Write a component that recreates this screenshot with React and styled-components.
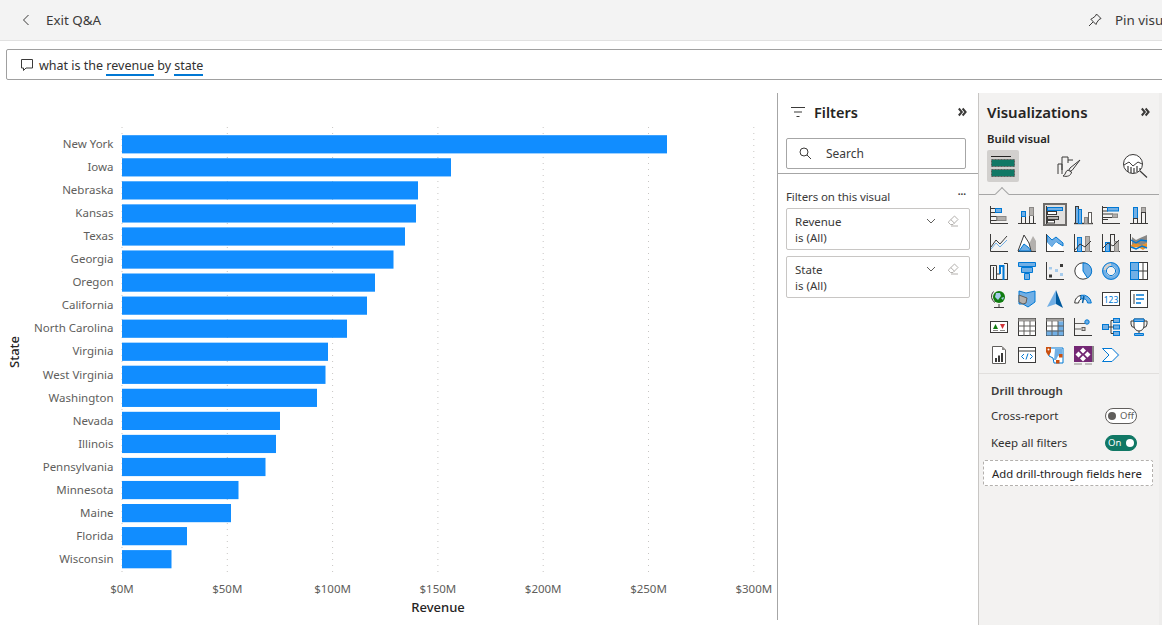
import React from "react";
import styled, { createGlobalStyle } from "styled-components";

const D = "#3b3a39";
const B = "#0078d4";
const L = "#71afe5";
const G = "#b3b0ad";

const states = [
	["New York", 545], ["Iowa", 329], ["Nebraska", 296], ["Kansas", 294], ["Texas", 283],
	["Georgia", 271.5], ["Oregon", 253], ["California", 245], ["North Carolina", 225], ["Virginia", 206],
	["West Virginia", 203.5], ["Washington", 195], ["Nevada", 158], ["Illinois", 154], ["Pennsylvania", 143.5],
	["Minnesota", 116.5], ["Maine", 109], ["Florida", 65], ["Wisconsin", 49.5]
];
const ticks = ["$0M", "$50M", "$100M", "$150M", "$200M", "$250M", "$300M"];

const GlobalStyle = createGlobalStyle`
	html, body { margin: 0; padding: 0; background: #fff; }
	body { font-family: "Noto Sans", "Open Sans", sans-serif; font-size: 12px; color: #252423; overflow: hidden; }
`;

const Page = styled.div`
	width: 1162px;
	height: 625px;
	overflow: hidden;
	display: flex;
	flex-direction: column;
`;

const TopBar = styled.div`
	flex: none;
	width: 1200px;
	height: 40px;
	box-sizing: content-box;
	background: #f3f3f3;
	border-bottom: 1px solid #e1e1e1;
	display: flex;
	align-items: center;
	padding-left: 21px;
	font-size: 13.4px;
	color: #3b3a39;
`;

const ExitLabel = styled.span`
	margin-left: 15px;
`;

const PinGroup = styled.div`
	margin-left: auto;
	width: 133px;
	display: flex;
	align-items: center;
	gap: 13px;
`;

const AskRow = styled.div`
	flex: none;
	height: 52px;
	box-sizing: border-box;
	padding: 8px 0 13px 6px;
`;

const AskBox = styled.div`
	width: 1190px;
	height: 31px;
	box-sizing: border-box;
	border: 1px solid #a0a0a0;
	border-radius: 2px;
	display: flex;
	align-items: center;
	gap: 5px;
	padding-left: 13px;
	font-size: 12.5px;
	color: #323130;
	white-space: pre;
`;

const AskText = styled.span`
	padding-top: 2px;
`;

const Term = styled.span`
	display: inline-block;
	line-height: 17px;
	border-bottom: 2px solid ${B};
	margin-bottom: -2px;
`;

const Main = styled.div`
	flex: 1;
	display: flex;
	min-height: 0;
`;

const ChartArea = styled.div`
	width: 777px;
	flex: none;
`;

const Chart = styled.svg`
	display: block;
	font-family: "Noto Sans", "Open Sans", sans-serif;
`;

const FilterPane = styled.div`
	width: 200px;
	flex: none;
	height: 527px;
	border-left: 1px solid #a6a6a6;
	display: flex;
	flex-direction: column;
`;

const FilterHead = styled.div`
	height: 38px;
	margin-bottom: 7px;
	display: flex;
	align-items: center;
	padding: 0 11px 0 13px;
	gap: 9px;
`;

const PaneTitle = styled.div`
	font-size: ${(p) => p.$size || "15px"};
	font-weight: 600;
	color: #252423;
	flex: 1;
`;

const SearchWrap = styled.div`
	padding: 0 12px 0 8px;
`;

const SearchBox = styled.div`
	height: 31px;
	box-sizing: border-box;
	border: 1px solid #a6a6a6;
	border-radius: 2px;
	display: flex;
	align-items: center;
	gap: 14px;
	padding-left: 12px;
	color: #3b3a39;
`;

const FilterBody = styled.div`
	margin-top: 4px;
	border-top: 1px solid #a6a6a6;
	padding: 16px 8px 0 8px;
	display: flex;
	flex-direction: column;
	gap: 6px;
`;

const SectionRow = styled.div`
	display: flex;
	justify-content: space-between;
	align-items: center;
	height: 13px;
	margin-bottom: -1px;
	font-size: 11.5px;
	letter-spacing: -0.1px;
	color: #3b3a39;
	padding-right: 4px;
`;

const Dots = styled.span`
	font-weight: 700;
	line-height: 6px;
	font-size: 10px;
	margin-top: -6px;
`;

const FilterCard = styled.div`
	height: 42px;
	box-sizing: border-box;
	border: 1px solid #c8c6c4;
	border-radius: 2px;
	padding: 5px 8px 0;
	position: relative;
	font-size: 11.5px;
	line-height: 16px;
	color: #3b3a39;
`;

const CardIcons = styled.div`
	position: absolute;
	right: 10px;
	top: 6px;
	display: flex;
	align-items: center;
	gap: 11px;
`;

const VizPane = styled.div`
	flex: 1;
	background: #f3f2f1;
	border-left: 1px solid #c8c6c4;
	border-right: 3px solid #eeedec;
	display: flex;
	flex-direction: column;
`;

const VizHead = styled.div`
	height: 38px;
	display: flex;
	align-items: center;
	padding: 0 9px 0 8px;
`;

const BuildLabel = styled.div`
	font-size: 11.3px;
	font-weight: 600;
	color: #252423;
	padding-left: 8px;
	line-height: 15px;
`;

const Tabs = styled.div`
	position: relative;
	height: 44px;
	margin-top: 4px;
	border-bottom: 1px solid #a6a6a6;
	display: grid;
	grid-template-columns: 32px 32px 32px;
	justify-content: space-between;
	padding: 0 8px 0 8px;
	&::after {
		content: "";
		position: absolute;
		left: 18px;
		bottom: -5px;
		width: 9px;
		height: 9px;
		background: #f3f2f1;
		border-left: 1px solid #a6a6a6;
		border-top: 1px solid #a6a6a6;
		transform: rotate(45deg);
	}
`;

const Tab = styled.div`
	width: 32px;
	height: 32px;
	display: flex;
	align-items: center;
	justify-content: center;
	background: ${(p) => (p.$active ? "#d2d0ce" : "transparent")};
	border-radius: 2px;
`;

const VizGrid = styled.div`
	display: grid;
	grid-template-columns: repeat(6, 28px);
	grid-auto-rows: 28px;
	padding: 6px 0 4px 6px;
	border-bottom: 1px solid #e1dfdd;
`;

const VizCell = styled.div`
	display: flex;
	align-items: center;
	justify-content: center;
	${(p) => p.$active && `
		margin: 2px 2px 3px;
		background: #e1dfdd;
		border: 2px solid #6e6c6a;
	`}
`;

const DrillSection = styled.div`
	padding: 8px 0 0 12px;
`;

const DrillTitle = styled.div`
	font-size: 11.5px;
	font-weight: 600;
	color: #3b3a39;
	line-height: 17px;
`;

const ToggleRow = styled.div`
	display: flex;
	align-items: center;
	justify-content: space-between;
	width: 146px;
	height: 27px;
	font-size: 11.5px;
	color: #323130;
	margin-top: ${(p) => (p.$first ? "3px" : "0")};
`;

const Toggle = styled.div`
	width: 32px;
	height: 16px;
	box-sizing: border-box;
	border-radius: 8px;
	border: 1px solid ${(p) => (p.$on ? "#117865" : "#605e5c")};
	background: ${(p) => (p.$on ? "#117865" : "#fff")};
	color: ${(p) => (p.$on ? "#fff" : "#605e5c")};
	display: flex;
	flex-direction: ${(p) => (p.$on ? "row" : "row-reverse")};
	justify-content: space-between;
	align-items: center;
	padding: 0 2px;
	font-size: 9.5px;
	line-height: 14px;
`;

const Knob = styled.span`
	width: 8px;
	height: 8px;
	border-radius: 50%;
	background: ${(p) => (p.$on ? "#fff" : "#605e5c")};
`;

const DropZone = styled.div`
	margin: 4px 6px 0 4px;
	height: 26px;
	box-sizing: border-box;
	background: #fff;
	border: 1px dashed #b3b0ad;
	border-radius: 2px;
	display: flex;
	align-items: center;
	padding-left: 8px;
	font-size: 11.3px;
	color: #252423;
	white-space: nowrap;
`;

const IconSvg = styled.svg`
	display: block;
	flex: none;
	overflow: visible;
`;

const Bx = ({ x, y, w, h, f, s }) => <rect x={x} y={y} width={w} height={h} fill={f || "none"} stroke={s || "none"} />;
const Ln = ({ d, s = D, w = 1 }) => <path d={d} fill="none" stroke={s} strokeWidth={w} />;

const DoubleChevron = () => (
	<IconSvg width="9" height="10" viewBox="0 0 9 10">
		<path d="M.8 1.5 3.8 5 .8 8.5M4.6 1.5 7.6 5 4.6 8.5" fill="none" stroke="#3b3a39" strokeWidth="2" />
	</IconSvg>
);

const Eraser = () => (
	<IconSvg width="12" height="12" viewBox="0 0 12 12">
		<path d="M7.5 1 11 4.5 6 9.5H3.5L1.2 7.2ZM3.8 4.6 7.4 8.1M4 11H11" fill="none" stroke="#b3b0ad" />
	</IconSvg>
);

const ChevronDown = () => (
	<IconSvg width="10" height="8" viewBox="0 0 10 8">
		<path d="M1 2 5 6 9 2" fill="none" stroke="#605e5c" />
	</IconSvg>
);

const vizIcons = [
	<><Ln d="M.5 0V17.5H18" /><Bx x={.5} y={2.5} w={5} h={4} s={D} /><Bx x={5.5} y={2.5} w={6} h={4} f={L} s={B} /><Bx x={.5} y={10.5} w={6.5} h={4} s={D} /><Bx x={7} y={10.5} w={9} h={4} f={G} s="#8a8886" /></>,
	<><Ln d="M0 17.5H18" /><Bx x={3.5} y={10.5} w={4} h={7} s={D} /><Bx x={3.5} y={5.5} w={4} h={5} f={L} s={B} /><Bx x={11.5} y={9.5} w={4} h={8} s={D} /><Bx x={11.5} y={1.5} w={4} h={8} f={G} s="#8a8886" /></>,
	<><Ln d="M.5 0V18" /><Bx x={1.5} y={1.5} w={15} h={3} f={L} s={B} /><Bx x={1.5} y={5.5} w={9} h={3} f="#fff" s={D} /><Bx x={1.5} y={10.5} w={11} h={3} f={G} s={D} /><Bx x={1.5} y={14.5} w={7} h={2.5} f="#fff" s={D} /></>,
	<><Ln d="M0 17.5H19" w={1.4} /><Bx x={1.5} y={.5} w={3} h={17} s={D} f={L} /><Bx x={4.5} y={3.5} w={3} h={14} f={L} s={B} /><Bx x={10.5} y={11.5} w={3} h={6} f={G} s="#8a8886" /><Bx x={14.5} y={6.5} w={3} h={11} f="#fff" s="#605e5c" /></>,
	<><Ln d="M.5 0V18M0 17.5H18" /><Bx x={.5} y={1.5} w={5} h={3.5} s={D} /><Bx x={5.5} y={1.5} w={11} h={3.5} f={L} s={B} /><Bx x={.5} y={8} w={10} h={3.5} s={D} /><Bx x={10.5} y={8} w={5} h={3.5} f={G} s="#8a8886" /><Ln d="M.5 13.5H6" /></>,
	<><Ln d="M0 17.5H18" /><Bx x={3.5} y={1.5} w={4} h={11} f={L} s={B} /><Bx x={3.5} y={12.5} w={4} h={5} s={D} /><Bx x={11.5} y={1.5} w={4} h={5} f={G} s="#8a8886" /><Bx x={11.5} y={6.5} w={4} h={11} s={D} /></>,

	<><Ln d="M.5 0V17.5H18" /><Ln d="M1 13 6 6l4 4 7-8" s={D} /><Ln d="M1 15 6 9l4 4 7-7" s={L} /></>,
	<><Ln d="M0 17.5H18" /><path d="M1 17 7 5l4 5 4-8 3 5v10Z" fill={G} /><path d="M0 17 6 1l5 8 2 8Z" fill="#fff" stroke={D} /><path d="M1 17 6 10l4 3 3 4Z" fill={L} stroke={B} /></>,
	<><path d="M1 1 6 6l4-3 7 6v3L10 8l-4 5-5-5Z" fill={L} stroke={B} /><path d="M1 8 6 13l4-5 7 5v4H1Z" fill="#fff" /><Ln d="M0 17.5H18" /><Ln d="M.5 0V18" /></>,
	<><Ln d="M.5 0V18M0 17.5H18" /><Bx x={3.5} y={3.5} w={4} h={14} f={L} s={B} /><Bx x={11.5} y={2.5} w={4} h={15} f={G} s="#8a8886" /><Ln d="M1 16 6 10l5 3 6-6" /></>,
	<><Ln d="M.5 0V18M0 17.5H18" /><Bx x={3.5} y={8.5} w={4} h={9} f={L} s={B} /><Bx x={8.5} y={.5} w={4} h={17} s={D} /><Bx x={12.5} y={7.5} w={4} h={10} f={G} s="#8a8886" /><Ln d="M1 14 6 9l5 3 6-6" /></>,
	<><Ln d="M.5 0V18M0 17.5H18" /><path d="M2 3 6 6l4-2 7-3v8l-6 3-4-1-5 2Z" fill="#8a8886" /><path d="M1 11 6 9l5 2 6-2v4l-4 3-5-3-6 1Z" fill="#e8912d" /><Ln d="M1 6 6 9l5-3 6 1" s={B} w={1.4} /><Ln d="M1 13 6 15l6-3 5 2" s={B} w={1.4} /></>,

	<><Ln d="M0 17.5H18M.5 3V18M3.5 5V18M6.5 4V18" /><Ln d="M.5 3.5H6.5V12H10" /><Ln d="M10 12V4H13.5V18" s={B} w={2} /><Ln d="M14 1.5H17.5V18" /></>,
	<><path d="M.5 .5H17.5V4.5H.5Z" fill={L} stroke={B} /><path d="M3.5 5.5H14.5V10.5H3.5Z" fill={L} stroke={B} /><path d="M6.5 11.5H11.5V17.5H6.5Z" fill={L} stroke={B} /></>,
	<><Ln d="M.5 0V17.5H18" /><Bx x={14} y={2} w={3} h={3} f={D} /><Bx x={3} y={5} w={3} h={2.5} f="#a6cbec" /><Bx x={9} y={7} w={3} h={3} f="#a6cbec" /><Bx x={14} y={11} w={3} h={3} f="#a6cbec" /><Bx x={3} y={12.5} w={3} h={3} f={D} /></>,
	<><circle cx={9} cy={9} r={8.2} fill="#fff" stroke={D} /><path d="M9 1A8 8 0 0 1 13.5 16L9 9Z" fill={L} stroke={B} /></>,
	<><circle cx={9} cy={9} r={7} fill="none" stroke={L} strokeWidth={3.4} /><path d="M9 .7A8.3 8.3 0 0 0 .9 8H4.7A4.4 4.4 0 0 1 9 4.6Z" fill="#d2d0ce" /><circle cx={9} cy={9} r={8.4} fill="none" stroke={B} /><circle cx={9} cy={9} r={4.6} fill="#f3f2f1" stroke={B} /></>,
	<><Bx x={.5} y={.5} w={17} h={17} s={D} f="#fff" /><Bx x={.5} y={.5} w={8} h={8} f={L} s={B} /><Bx x={.5} y={8.5} w={8} h={9} f={L} s={B} /><Ln d="M8.5 9H18M13 .5V9M13 9V18" /></>,

	<><circle cx={9} cy={7} r={6} fill="#107c10" /><path d="M6 3h4l1 3-3 4-3-3ZM11 8l3-1-1 3Z" fill="#a6cbec" /><Ln d="M3.5 1.5A7 7 0 0 0 5 12.5M9 14V17M4 17.5H14" /></>,
	<><path d="M1 1 8 3l9-2v11l-7 5-5-3H1Z" fill={L} stroke={B} /><path d="M1 5 9 8l-1 5 -3 1-4-2Z" fill={G} stroke="#605e5c" /></>,
	<><path d="M10 0 17 18 10 14Z" fill="#005a9e" /><path d="M10 0 1 17 10 14Z" fill={L} /></>,
	<><path d="M.7 13A8.4 8.4 0 0 1 7 5.3V9A4.8 4.8 0 0 0 4.5 13Z" fill="#fff" stroke={D} /><path d="M7 5.3A8.4 8.4 0 0 1 17.3 13H13.6A4.8 4.8 0 0 0 7 9Z" fill={L} stroke={B} /><Ln d="M8.5 13 10 6" s="#005a9e" w={1.4} /></>,
	<><Bx x={.5} y={2.5} w={17} h={13} s={D} f="#fff" /><text x={9} y={12.5} textAnchor="middle" fontSize="8.5" fill={B} fontFamily="Noto Sans">123</text></>,
	<><Bx x={.5} y={.5} w={17} h={17} s={D} f="#fff" /><Ln d="M4 4V14" /><Ln d="M6 5H14M6 9H14M6 13H11" s={B} w={1.6} /></>,

	<><Bx x={.5} y={3.5} w={17} h={11} s={D} f="#fff" /><path d="M3 11 5.5 6 8 11Z" fill="#107c10" /><path d="M10 6H15L12.5 11Z" fill="#d13438" /><Ln d="M3 12.5H8M10 12.5H15" s="#8a8886" /></>,
	<><Bx x={.5} y={.5} w={17} h={17} s={D} f="#fff" /><Bx x={.5} y={.5} w={17} h={3} f="#a19f9d" /><Ln d="M6 3V18M12 3V18M.5 8H18M.5 13H18" s="#605e5c" /></>,
	<><Bx x={.5} y={.5} w={17} h={17} s={D} f="#fff" /><Bx x={.5} y={.5} w={17} h={3} f="#a19f9d" /><Bx x={12} y={3.5} w={5.5} h={14} f={L} /><Bx x={.5} y={12.5} w={12} h={5} f={L} /><Ln d="M6 3V18M12 3V18M.5 8H18M.5 13H18" s="#605e5c" /></>,
	<><Ln d="M.5 0V18M0 17.5H18" /><Ln d="M1 5.5H11M1 11H7" s="#605e5c" /><circle cx={13} cy={4} r={2.2} fill={L} stroke={B} /><Bx x={8} y={9.5} w={3} h={3} f="#d2d0ce" s="#605e5c" /></>,
	<><Bx x={.5} y={6.5} w={6} h={5} f={L} s={B} /><Bx x={11.5} y={.5} w={6} h={4} f={L} s={B} /><Bx x={11.5} y={7} w={6} h={4} f={L} s={B} /><Bx x={11.5} y={13.5} w={6} h={4} f={L} s={B} /><Ln d="M6.5 9H11.5M9 2.5V15.5M9 2.5H11.5M9 15.5H11.5" s={D} /></>,
	<><path d="M4 1H14V8A5 5 0 0 1 4 8Z" fill="#fff" stroke={D} /><path d="M4 1H14V3.5H4Z" fill={L} stroke={B} /><Ln d="M4 3H1V6A3.5 3.5 0 0 0 4.5 9.5M14 3H17V6A3.5 3.5 0 0 1 13.5 9.5M9 13V15" /><path d="M4.5 15.5H13.5V17.5H4.5Z" fill={L} stroke={B} /></>,

	<><path d="M2.5 .5H12L15.5 4V17.5H2.5Z" fill="#fff" stroke="#605e5c" /><path d="M12 .5V4H15.5Z" fill="#8a8886" /><Bx x={5} y={12} w={2} h={4} f={D} /><Bx x={8} y={9.5} w={2} h={6.5} f={D} /><Bx x={11} y={7} w={2} h={9} f={D} /></>,
	<><Bx x={.5} y={1.5} w={17} h={15} s={D} f="#fff" /><Ln d="M.5 5H18" /><Ln d="M6 8 3.5 10.5 6 13M12 8 14.5 10.5 12 13M10 7.5 8 13.5" s={B} /></>,
	<><path d="M3 2H17V17H8L7 12 3 10Z" fill="#fff" stroke={B} /><path d="M9 3H16V8L12 10 10 14H8Z" fill={L} /><path d="M0 1H5V6L2.5 10 0 6Z" fill="#ca5010" /><circle cx={2.5} cy={3.5} r={1} fill="#fff" /><Bx x={13} y={8} w={3.5} h={3.5} f="#ca5010" /><Bx x={10} y={14} w={3.5} h={3.5} f="#ca5010" /></>,
	<><Bx x={0} y={0} w={18} h={16} f="#742774" /><path d="M9 1.5 12 4.5 9 7.5 6 4.5ZM4.5 5.5 7.5 8.5 4.5 11.5 1.5 8.5ZM13.5 5.5 16.5 8.5 13.5 11.5 10.5 8.5ZM9 9.5 12 12.5 9 15.5 6 12.5Z" fill="#fff" /><Bx x={18} y={0} w={2} h={16} f="#8a8886" /><Ln d="M0 18H8M11 18H18" s="#8a8886" /></>,
	<><path d="M.5 2.5H10L16.5 9 10 15.5H.5L7 9Z" fill="#fff" stroke={B} /><path d="M10 2.5 17.5 9 10 15.5 16 9Z" fill={L} /></>
];

const App = () => {
	const x0 = 122;
	const step = 105.3;
	return (
		<Page>
			<GlobalStyle />
			<TopBar>
				<IconSvg width="10" height="12" viewBox="0 0 10 12">
					<path d="M7.5 1 2.5 6l5 5" fill="none" stroke="#3b3a39" />
				</IconSvg>
				<ExitLabel>Exit Q&amp;A</ExitLabel>
				<PinGroup>
					<IconSvg width="14" height="14" viewBox="0 0 14 14">
						<path d="M8.5 1 13 5.5 11 6.5 8.5 10 8 11.5 2.8 6.2 4.2 5.5 7.5 3ZM5 9 1 13" fill="none" stroke="#3b3a39" />
					</IconSvg>
					<span>Pin visual</span>
				</PinGroup>
			</TopBar>
			<AskRow>
				<AskBox>
					<IconSvg width="14" height="14" viewBox="0 0 14 14">
						<path d="M1.5 1.5H12.5V10H6L3.5 12.5V10H1.5Z" fill="none" stroke="#3b3a39" strokeLinejoin="round" />
					</IconSvg>
					<AskText>what is the <Term>revenue</Term> by <Term>state</Term></AskText>
				</AskBox>
			</AskRow>
			<Main>
				<ChartArea>
					<Chart width="777" height="532" viewBox="0 93 777 532">
						{ticks.map((t, i) => (
							<line key={t} x1={x0 + i * step} x2={x0 + i * step} y1="127" y2="576" stroke="#c8c6c4" strokeDasharray="1 5" />
						))}
						{states.map(([name, w], i) => (
							<g key={name}>
								<text x="113.5" y={148 + i * 23.05} textAnchor="end" fontSize="11.5" fill="#605e5c">{name}</text>
								<rect x={x0} y={135.2 + i * 23.05} width={w} height="18.2" fill="#118dff" />
							</g>
						))}
						{ticks.map((t, i) => (
							<text key={t} x={x0 + i * step} y="592.5" textAnchor="middle" fontSize="11.5" fill="#605e5c">{t}</text>
						))}
						<text x="438" y="612" textAnchor="middle" fontSize="13" fontWeight="500" fill="#252423">Revenue</text>
						<text transform="translate(19 352) rotate(-90)" textAnchor="middle" fontSize="13" fontWeight="500" fill="#252423">State</text>
					</Chart>
				</ChartArea>
				<FilterPane>
					<FilterHead>
						<IconSvg width="14" height="12" viewBox="0 0 14 12">
							<path d="M0 1.5H14M3 6H11M5.5 10.5H8.5" fill="none" stroke="#3b3a39" strokeWidth="1.2" />
						</IconSvg>
						<PaneTitle $size="14.5px">Filters</PaneTitle>
						<DoubleChevron />
					</FilterHead>
					<SearchWrap>
						<SearchBox>
							<IconSvg width="13" height="13" viewBox="0 0 13 13">
								<circle cx="5" cy="5" r="4" fill="none" stroke="#3b3a39" />
								<path d="M8 8 12 12" stroke="#3b3a39" />
							</IconSvg>
							<span>Search</span>
						</SearchBox>
					</SearchWrap>
					<FilterBody>
						<SectionRow>
							<span>Filters on this visual</span>
							<Dots>···</Dots>
						</SectionRow>
						{["Revenue", "State"].map((name) => (
							<FilterCard key={name}>
								{name}<br />is (All)
								<CardIcons>
									<ChevronDown />
									<Eraser />
								</CardIcons>
							</FilterCard>
						))}
					</FilterBody>
				</FilterPane>
				<VizPane>
					<VizHead>
						<PaneTitle>Visualizations</PaneTitle>
						<DoubleChevron />
					</VizHead>
					<BuildLabel>Build visual</BuildLabel>
					<Tabs>
						<Tab $active>
							<IconSvg width="24" height="24" viewBox="0 0 24 24">
								<path d="M0 2.5H20" stroke="#252423" />
								<rect x=".5" y="5.5" width="23" height="7" fill="#117865" stroke="#605e5c" strokeDasharray="2 1" />
								<rect x=".5" y="15.5" width="23" height="7" fill="#117865" stroke="#605e5c" strokeDasharray="2 1" />
							</IconSvg>
						</Tab>
						<Tab>
							<IconSvg width="24" height="24" viewBox="0 0 24 24">
								<path d="M1 20V10H5V20M5 16V3H11V9M11 6H16" fill="none" stroke="#3b3a39" />
								<path d="M23 6 13 14 11 18 15 16.5Z" fill="#f3f2f1" stroke="#3b3a39" />
								<path d="M11 16C8 17 9 21 6 22 10 23 14 22 14.5 18Z" fill="#f3f2f1" stroke="#3b3a39" />
							</IconSvg>
						</Tab>
						<Tab>
							<IconSvg width="26" height="26" viewBox="0 0 26 26">
								<circle cx="11" cy="11" r="9.5" fill="#fff" stroke="#3b3a39" />
								<path d="M2 12 7 9l4 4 5-4 4 2" fill="none" stroke="#3b3a39" />
								<path d="M6 13V19M9 14V20M12 15V20M15 13V19M18 15V17M18 18 25 24.5" fill="none" stroke="#3b3a39" strokeWidth="1.2" />
							</IconSvg>
						</Tab>
					</Tabs>
					<VizGrid>
						{vizIcons.map((icon, i) => (
							<VizCell key={i} $active={i === 2}>
								<IconSvg width="18" height="18" viewBox="0 0 18 18">{icon}</IconSvg>
							</VizCell>
						))}
					</VizGrid>
					<DrillSection>
						<DrillTitle>Drill through</DrillTitle>
						<ToggleRow $first>
							<span>Cross-report</span>
							<Toggle><span>Off</span><Knob /></Toggle>
						</ToggleRow>
						<ToggleRow>
							<span>Keep all filters</span>
							<Toggle $on><span>On</span><Knob $on /></Toggle>
						</ToggleRow>
					</DrillSection>
					<DropZone>Add drill-through fields here</DropZone>
				</VizPane>
			</Main>
		</Page>
	);
};

export default App;
